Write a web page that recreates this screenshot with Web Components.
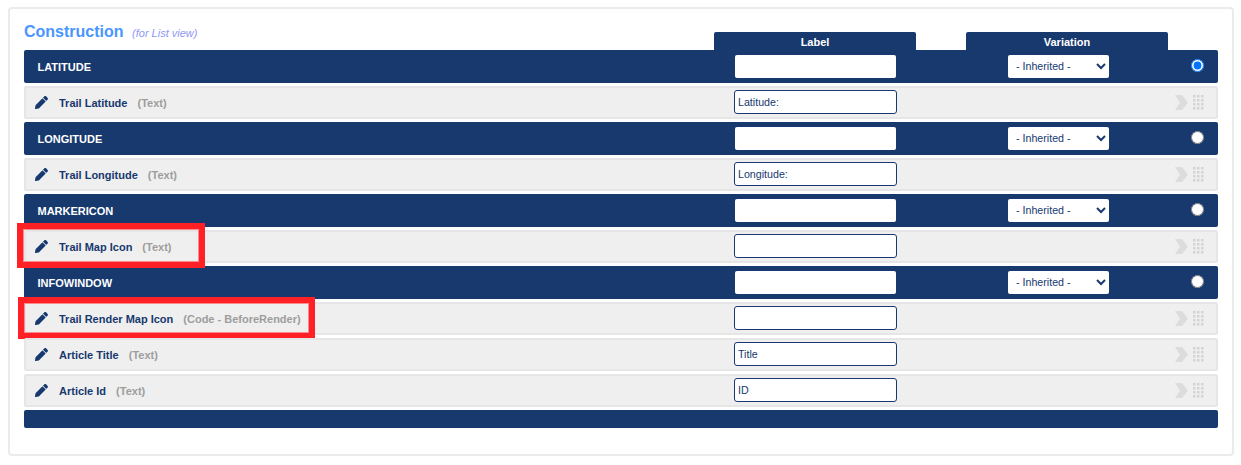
<!doctype html>
<html><head><meta charset="utf-8">
<style>
html,body{margin:0;padding:0;background:#fff;font-family:"Liberation Sans",Arial,sans-serif}
</style></head><body>
<x-card>
  <span slot="title">Construction</span>
  <span slot="note">(for List view)</span>
  <x-tab slot="tabs">Label</x-tab>
  <x-tab slot="tabs">Variation</x-tab>
  <x-bar label="LATITUDE" checked></x-bar>
  <x-row name="Trail Latitude" type="(Text)" value="Latitude:"></x-row>
  <x-bar label="LONGITUDE"></x-bar>
  <x-row name="Trail Longitude" type="(Text)" value="Longitude:"></x-row>
  <x-bar label="MARKERICON"></x-bar>
  <x-row name="Trail Map Icon" type="(Text)" value="" callout="188,45,-9.5,-8.5"></x-row>
  <x-bar label="INFOWINDOW"></x-bar>
  <x-row name="Trail Render Map Icon" type="(Code - BeforeRender)" value="" callout="297.5,42,-8.5,-7"></x-row>
  <x-row name="Article Title" type="(Text)" value="Title"></x-row>
  <x-row name="Article Id" type="(Text)" value="ID"></x-row>
  <x-foot></x-foot>
</x-card>
<script>
const shadow=(el,html)=>{el.attachShadow({mode:'open'}).innerHTML=html;};
const esc=s=>String(s).replace(/&/g,'&amp;').replace(/"/g,'&quot;').replace(/</g,'&lt;');

customElements.define('x-card',class extends HTMLElement{constructor(){super();shadow(this,`<style>
:host{display:block;box-sizing:border-box;width:1226px;height:449px;margin:7px 0 0 8px;border:2px solid #ebebeb;border-radius:4px;padding:0 14px;background:#fff}
.head{display:flex;height:40.5px;justify-content:space-between;align-items:flex-start}
.t{display:flex;align-items:baseline;gap:8.5px;padding:14px 0 0 0}
.title{font-size:16px;font-weight:700;color:#4a96ff}
.note{font-size:11px;font-style:italic;color:#8f97f5}
.tabs{display:flex;gap:50px;margin:23px 50px 0 0}
.list{display:flex;flex-direction:column;gap:3px}
</style><div class="head"><div class="t"><span class="title"><slot name="title"></slot></span><span class="note"><slot name="note"></slot></span></div><div class="tabs"><slot name="tabs"></slot></div></div><div class="list"><slot></slot></div>`);}});

customElements.define('x-tab',class extends HTMLElement{constructor(){super();shadow(this,`<style>
:host{display:flex;align-items:center;justify-content:center;box-sizing:border-box;padding-top:2px;width:202px;height:18px;background:#17396e;border-radius:2px 2px 0 0;color:#fff;font-size:11px;font-weight:700}
</style><slot></slot>`);}});

customElements.define('x-bar',class extends HTMLElement{connectedCallback(){if(this.shadowRoot)return;shadow(this,`<style>
:host{display:grid;grid-template-columns:711px 161px 112px 101px 1fr;align-items:center;height:33px;background:#17396e;border-radius:2px;color:#fff;font-size:11px;font-weight:700}
.l{padding:2px 0 0 13.5px}
input[type=text]{box-sizing:border-box;width:161px;height:23px;border:0;border-radius:2px;background:#fff;margin:0;padding:0;display:block}
select{grid-column:4;box-sizing:border-box;width:101px;height:23px;border:0;border-radius:2px;background:#fff;color:#17396e;font:10.67px "Liberation Sans",Arial,sans-serif;padding:0 0 0 4px;margin:0;display:block}
.r{display:flex;justify-content:flex-end;padding:0 14px 1px 0}
input[type=radio]{width:13px;height:13px;margin:0;display:block}
</style><span class="l">${esc(this.getAttribute('label'))}</span><input type="text" aria-label="label"><select aria-label="variation"><option>- Inherited -</option></select><span class="r"><input type="radio" name="g" ${this.hasAttribute('checked')?'checked':''} aria-label="select"></span>`);}});

customElements.define('x-callout',class extends HTMLElement{constructor(){super();shadow(this,`<style>
:host{display:block;position:absolute;box-sizing:border-box;border:6px solid #ff2125;outline:1px solid #fb8a8c;outline-offset:-7px;pointer-events:none}
</style>`);}});

customElements.define('x-row',class extends HTMLElement{connectedCallback(){if(this.shadowRoot)return;
const c=this.getAttribute('callout');let co='';
if(c){const [w,h,l,t]=c.split(',');co=`<x-callout style="width:${w}px;height:${h}px;left:${l}px;top:${t}px"></x-callout>`;}
shadow(this,`<style>
:host{display:grid;grid-template-columns:33px 675px 163px 1fr;align-items:center;position:relative;box-sizing:border-box;height:33px;background:#efefef;border:2px solid #e6e6e6;border-radius:2px;font-size:11px;font-weight:700;color:#17396e}
.i{padding-left:9px;display:flex}
.n{display:flex;gap:10px;white-space:nowrap;padding-top:2px}
.ty{color:#9d9d9d}
input{box-sizing:border-box;width:163px;height:24px;border:1px solid #17396e;border-radius:3px;background:#fff;color:#17396e;font:10.67px "Liberation Sans",Arial,sans-serif;padding:0 3px;margin:0;display:block}
.h{display:flex;justify-content:flex-end;align-items:center;gap:5px;padding-right:12px}
svg{display:block}
</style><span class="i"><svg width="13" height="13" viewBox="0 0 512 512"><path fill="#17396e" d="M497.9 142.1l-46.1 46.1c-4.7 4.7-12.3 4.7-17 0l-111-111c-4.7-4.7-4.7-12.3 0-17l46.1-46.1c18.7-18.7 49.1-18.7 67.9 0l60.1 60.1c18.8 18.7 18.8 49.1 0 67.9zM284.2 99.8L21.6 362.4.4 483.9c-2.9 16.4 11.4 30.6 27.8 27.8l121.5-21.3 262.6-262.6c4.7-4.7 4.7-12.3 0-17l-111-111c-4.8-4.7-12.4-4.7-17.1 0z"/></svg></span>
<span class="n"><span>${esc(this.getAttribute('name'))}</span><span class="ty">${esc(this.getAttribute('type'))}</span></span>
<input type="text" value="${esc(this.getAttribute('value')||'')}" aria-label="label">
<span class="h"><svg width="13" height="15" viewBox="0 0 13 15"><path fill="#dcdcdc" d="M0 0h7l6 7.5-6 7.5H0l5-7.5z"/></svg><svg width="11" height="15" viewBox="0 0 11 15"><g fill="#d4d4d4">${[0,4,8,12].map(y=>[0,4,8].map(x=>`<rect x="${x}" y="${y}" width="2.5" height="2.5"/>`).join('')).join('')}</g></svg></span>${co}`);}});

customElements.define('x-foot',class extends HTMLElement{constructor(){super();shadow(this,`<style>
:host{display:block;height:18px;background:#17396e;border-radius:2px}
</style>`);}});
</script>
</body></html>
